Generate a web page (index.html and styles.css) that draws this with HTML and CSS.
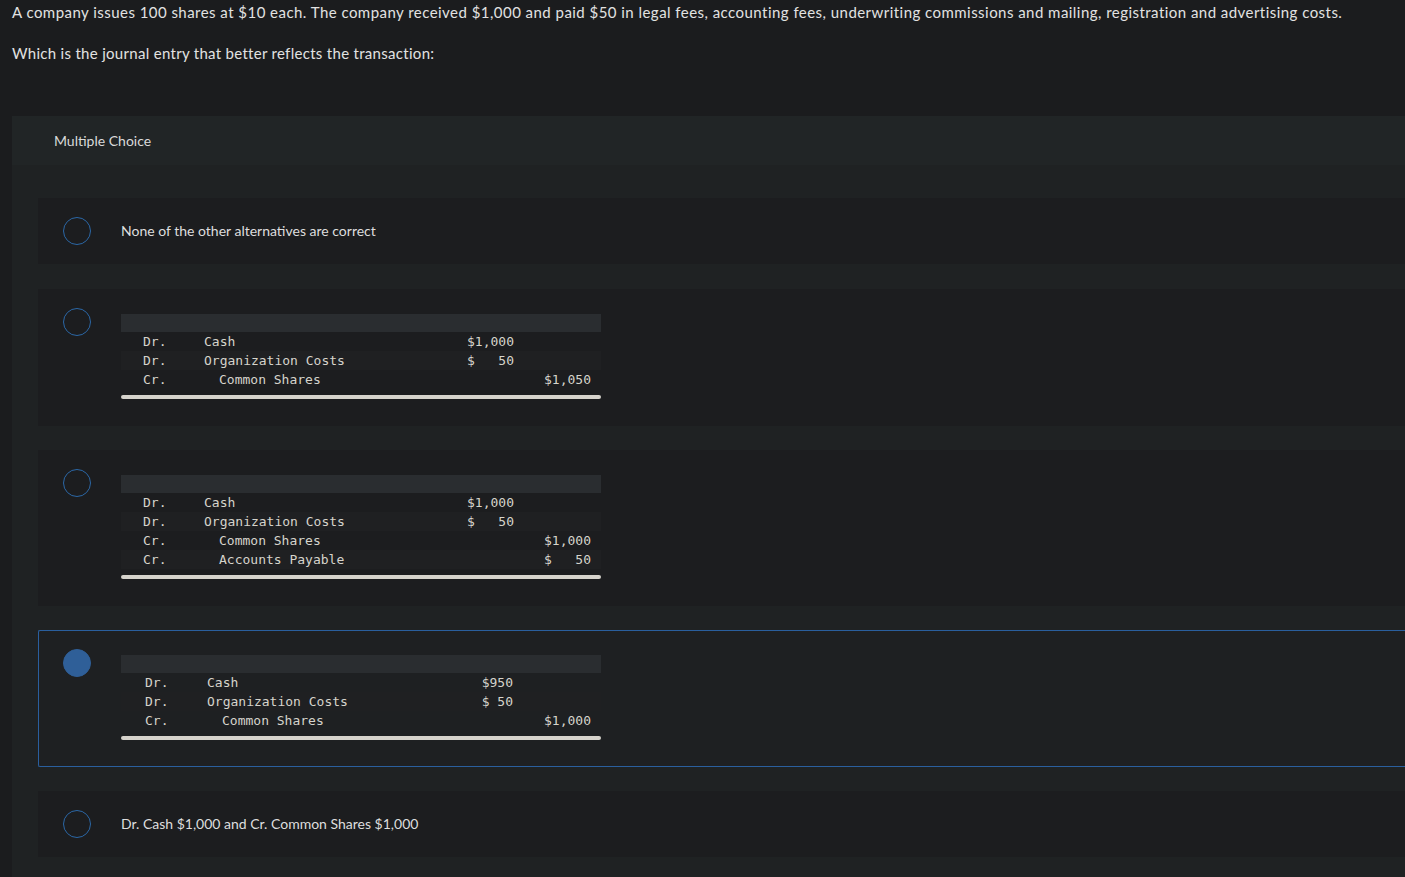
FILE: index.html
```html
<!DOCTYPE html>
<html lang="en">
<head>
<meta charset="utf-8">
<title>Multiple Choice</title>
<link rel="stylesheet" href="styles.css">
</head>
<body>
<div class="page">
  <p class="q q-first">A company issues 100 shares at $10 each. The company received $1,000 and paid $50 in legal fees, accounting fees, underwriting commissions and mailing, registration and advertising costs.</p>
  <p class="q q-second">Which is the journal entry that better reflects the transaction:</p>

  <section class="card">
    <div class="card-head">Multiple Choice</div>
    <div class="card-body">

      <div class="option option-first">
        <span class="radio"></span>
        <div class="opt-text">None of the other alternatives are correct</div>
      </div>

      <div class="option option-table">
        <span class="radio"></span>
        <div class="journal">
          <div class="j-head"></div>
          <div class="j-row"><span class="c1">Dr.</span><span class="c2">Cash</span><span class="c3">$1,000</span><span class="c4"></span></div>
          <div class="j-row alt"><span class="c1">Dr.</span><span class="c2">Organization Costs</span><span class="c3">$&nbsp;&nbsp;&nbsp;50</span><span class="c4"></span></div>
          <div class="j-row"><span class="c1">Cr.</span><span class="c2 ind">Common Shares</span><span class="c3"></span><span class="c4">$1,050</span></div>
          <div class="j-rule"></div>
        </div>
      </div>

      <div class="option option-table">
        <span class="radio"></span>
        <div class="journal">
          <div class="j-head"></div>
          <div class="j-row"><span class="c1">Dr.</span><span class="c2">Cash</span><span class="c3">$1,000</span><span class="c4"></span></div>
          <div class="j-row alt"><span class="c1">Dr.</span><span class="c2">Organization Costs</span><span class="c3">$&nbsp;&nbsp;&nbsp;50</span><span class="c4"></span></div>
          <div class="j-row"><span class="c1">Cr.</span><span class="c2 ind">Common Shares</span><span class="c3"></span><span class="c4">$1,000</span></div>
          <div class="j-row alt"><span class="c1">Cr.</span><span class="c2 ind">Accounts Payable</span><span class="c3"></span><span class="c4">$&nbsp;&nbsp;&nbsp;50</span></div>
          <div class="j-rule"></div>
        </div>
      </div>

      <div class="option option-table selected">
        <span class="radio"></span>
        <div class="journal journal-wide">
          <div class="j-head"></div>
          <div class="j-row"><span class="c1">Dr.</span><span class="c2">Cash</span><span class="c3">$950</span><span class="c4"></span></div>
          <div class="j-row alt"><span class="c1">Dr.</span><span class="c2">Organization Costs</span><span class="c3">$ 50</span><span class="c4"></span></div>
          <div class="j-row"><span class="c1">Cr.</span><span class="c2 ind">Common Shares</span><span class="c3"></span><span class="c4">$1,000</span></div>
          <div class="j-rule"></div>
        </div>
      </div>

      <div class="option">
        <span class="radio"></span>
        <div class="opt-text">Dr. Cash $1,000 and Cr. Common Shares $1,000</div>
      </div>

    </div>
  </section>
</div>
</body>
</html>
```
FILE: styles.css
```css
html {
  overflow: hidden;
}
body {
  margin: 0;
  background: #1b1c1e;
  color: #dcdcdc;
  font-family: "Lato", "Liberation Sans", sans-serif;
}
.page {
  padding: 0 0 0 12px;
}
.q {
  margin: 0;
  font-size: 15px;
  line-height: 24px;
  color: #e2e2e2;
}
.q-first {
  letter-spacing: 0.46px;
}
.q-second {
  margin-top: 17px;
  letter-spacing: 0.3px;
}
.card {
  margin-top: 51px;
  margin-right: -40px;
  background: #1f2223;
}
.card-head {
  height: 49px;
  display: flex;
  align-items: center;
  padding-left: 42px;
  background: #212526;
  font-size: 14px;
  color: #dadada;
}
.card-body {
  padding: 33px 0 20px 26px;
  display: flex;
  flex-direction: column;
  gap: 24px;
}
.option {
  display: flex;
  align-items: flex-start;
  gap: 30px;
  padding: 18px 0 18px 24px;
  background: #1c1d1f;
  border: 1px solid transparent;
  border-right: none;
}
.option-first {
  margin-bottom: 1px;
}
.option-table {
  padding-bottom: 26px;
}
.option.selected {
  border-color: #2a5f9e;
  border-radius: 2px 0 0 2px;
  background: #1e2022;
}
.radio {
  flex: none;
  box-sizing: border-box;
  width: 28px;
  height: 28px;
  border: 1.5px solid #2b67a6;
  border-radius: 50%;
}
.selected .radio {
  background: #2f5f98;
  border-color: #2f5f98;
}
.opt-text {
  font-size: 14px;
  line-height: 28px;
  color: #dedede;
}
.journal {
  margin-top: 6px;
  width: 480px;
  font-family: "DejaVu Sans Mono", "Liberation Mono", monospace;
  font-size: 13px;
  color: #d6d4cc;
}
.j-head {
  height: 18px;
  background: #2a2d30;
}
.j-row {
  display: grid;
  grid-template-columns: 83px 250px 60px 77px 10px;
  height: 19px;
  line-height: 19px;
  white-space: pre;
}
.journal-wide .j-row {
  grid-template-columns: 86px 246px 60px 78px 10px;
}
.j-row.alt {
  background: #1f2022;
}
.c1 {
  padding-left: 22px;
}
.journal-wide .c1 {
  padding-left: 24px;
}
.c2.ind {
  padding-left: 15px;
}
.c3, .c4 {
  text-align: right;
}
.j-rule {
  margin-top: 6px;
  height: 4px;
  border-radius: 2px;
  background: #d6d3cc;
}
```
